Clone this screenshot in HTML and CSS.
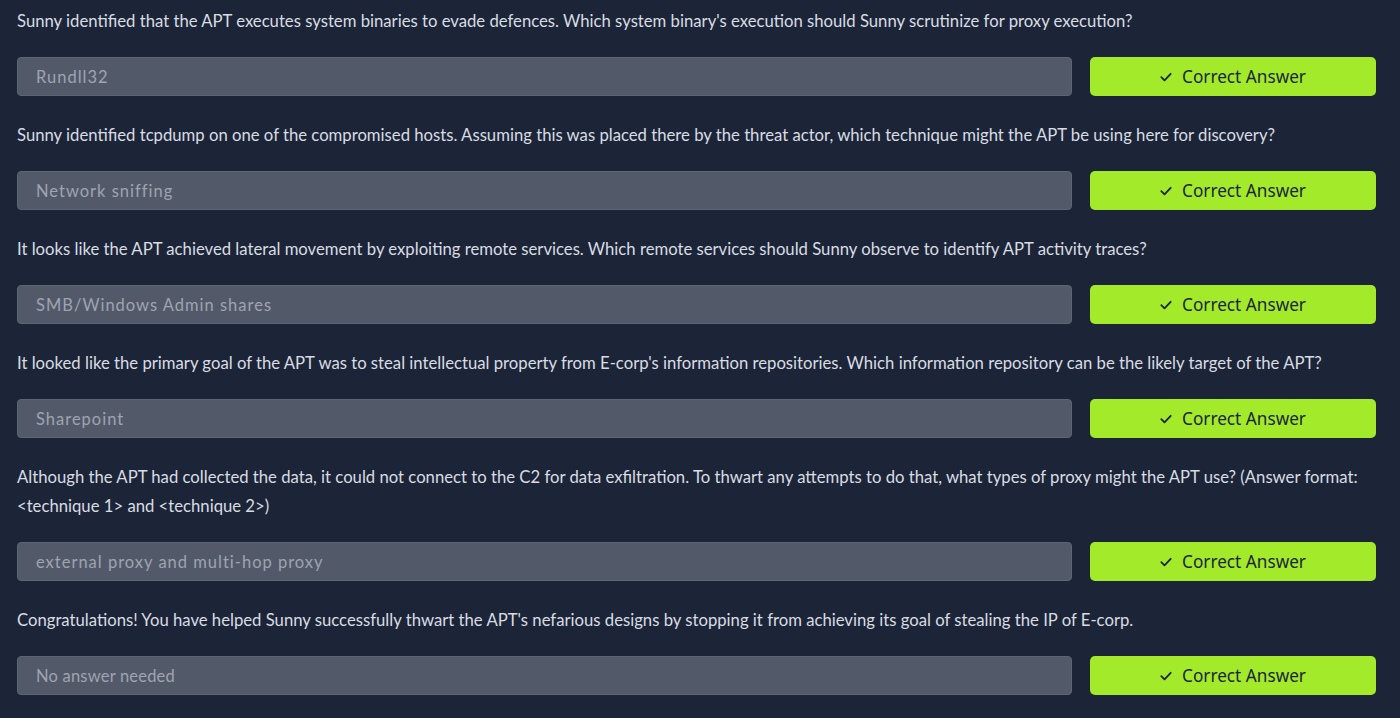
FILE: index.html
```html
<!DOCTYPE html>
<html lang="en">
<head>
<meta charset="utf-8">
<title>Tasks</title>
<link rel="stylesheet" href="styles.css">
</head>
<body>
<main class="tasks">
  <section class="q">
    <p class="q-text">Sunny identified that the APT executes system binaries to evade defences. Which system binary's execution should Sunny scrutinize for proxy execution?</p>
    <div class="q-row">
      <div class="answer">Rundll32</div>
      <button class="btn"><svg class="tick" viewBox="0 0 12 10" width="12" height="10"><path d="M1.3 5.2 L4.5 8.3 L10.7 1.8" fill="none" stroke="currentColor" stroke-width="1.8" stroke-linecap="round" stroke-linejoin="round"/></svg>Correct Answer</button>
    </div>
  </section>
  <section class="q">
    <p class="q-text">Sunny identified tcpdump on one of the compromised hosts. Assuming this was placed there by the threat actor, which technique might the APT be using here for discovery?</p>
    <div class="q-row">
      <div class="answer">Network sniffing</div>
      <button class="btn"><svg class="tick" viewBox="0 0 12 10" width="12" height="10"><path d="M1.3 5.2 L4.5 8.3 L10.7 1.8" fill="none" stroke="currentColor" stroke-width="1.8" stroke-linecap="round" stroke-linejoin="round"/></svg>Correct Answer</button>
    </div>
  </section>
  <section class="q">
    <p class="q-text">It looks like the APT achieved lateral movement by exploiting remote services. Which remote services should Sunny observe to identify APT activity traces?</p>
    <div class="q-row">
      <div class="answer">SMB/Windows Admin shares</div>
      <button class="btn"><svg class="tick" viewBox="0 0 12 10" width="12" height="10"><path d="M1.3 5.2 L4.5 8.3 L10.7 1.8" fill="none" stroke="currentColor" stroke-width="1.8" stroke-linecap="round" stroke-linejoin="round"/></svg>Correct Answer</button>
    </div>
  </section>
  <section class="q">
    <p class="q-text">It looked like the primary goal of the APT was to steal intellectual property from E-corp's information repositories. Which information repository can be the likely target of the APT?</p>
    <div class="q-row">
      <div class="answer">Sharepoint</div>
      <button class="btn"><svg class="tick" viewBox="0 0 12 10" width="12" height="10"><path d="M1.3 5.2 L4.5 8.3 L10.7 1.8" fill="none" stroke="currentColor" stroke-width="1.8" stroke-linecap="round" stroke-linejoin="round"/></svg>Correct Answer</button>
    </div>
  </section>
  <section class="q">
    <p class="q-text">Although the APT had collected the data, it could not connect to the C2 for data exfiltration. To thwart any attempts to do that, what types of proxy might the APT use? (Answer format: &lt;technique 1&gt; and &lt;technique 2&gt;)</p>
    <div class="q-row">
      <div class="answer">external proxy and multi-hop proxy</div>
      <button class="btn"><svg class="tick" viewBox="0 0 12 10" width="12" height="10"><path d="M1.3 5.2 L4.5 8.3 L10.7 1.8" fill="none" stroke="currentColor" stroke-width="1.8" stroke-linecap="round" stroke-linejoin="round"/></svg>Correct Answer</button>
    </div>
  </section>
  <section class="q">
    <p class="q-text">Congratulations! You have helped Sunny successfully thwart the APT's nefarious designs by stopping it from achieving its goal of stealing the IP of E-corp.</p>
    <div class="q-row">
      <div class="answer placeholder">No answer needed</div>
      <button class="btn"><svg class="tick" viewBox="0 0 12 10" width="12" height="10"><path d="M1.3 5.2 L4.5 8.3 L10.7 1.8" fill="none" stroke="currentColor" stroke-width="1.8" stroke-linecap="round" stroke-linejoin="round"/></svg>Correct Answer</button>
    </div>
  </section>
</main>
</body>
</html>
```
FILE: styles.css
```css
html, body {
  margin: 0;
  padding: 0;
  background: #1c2538;
}
body {
  font-family: Lato, "Noto Sans", sans-serif;
  color: #d9dce2;
  height: 718px;
  overflow: hidden;
}
.tasks {
  padding: 7px 24px 0 17px;
  display: flex;
  flex-direction: column;
  gap: 25px;
}
.q-text {
  margin: 0 0 21px 0;
  font-size: 16.7px;
  line-height: 29px;
}
.q-row {
  display: flex;
  gap: 18px;
  align-items: stretch;
}
.answer {
  flex: 1;
  height: 39px;
  box-sizing: border-box;
  background: #525a6a;
  border: 1px solid #5c6475;
  border-radius: 4px;
  padding: 0 18px;
  display: flex;
  align-items: center;
  font-size: 16.5px;
  letter-spacing: 1px;
  color: #9ea4b0;
}
.answer.placeholder {
  letter-spacing: 0.2px;
}
.btn {
  width: 286px;
  height: 39px;
  flex: none;
  background: #a3ea2a;
  border: none;
  border-radius: 5px;
  color: #1c2538;
  font-family: "Noto Sans", sans-serif;
  font-size: 17.2px;
  display: flex;
  align-items: center;
  justify-content: center;
  gap: 10px;
  padding: 0;
}
.tick {
  display: block;
}
```
